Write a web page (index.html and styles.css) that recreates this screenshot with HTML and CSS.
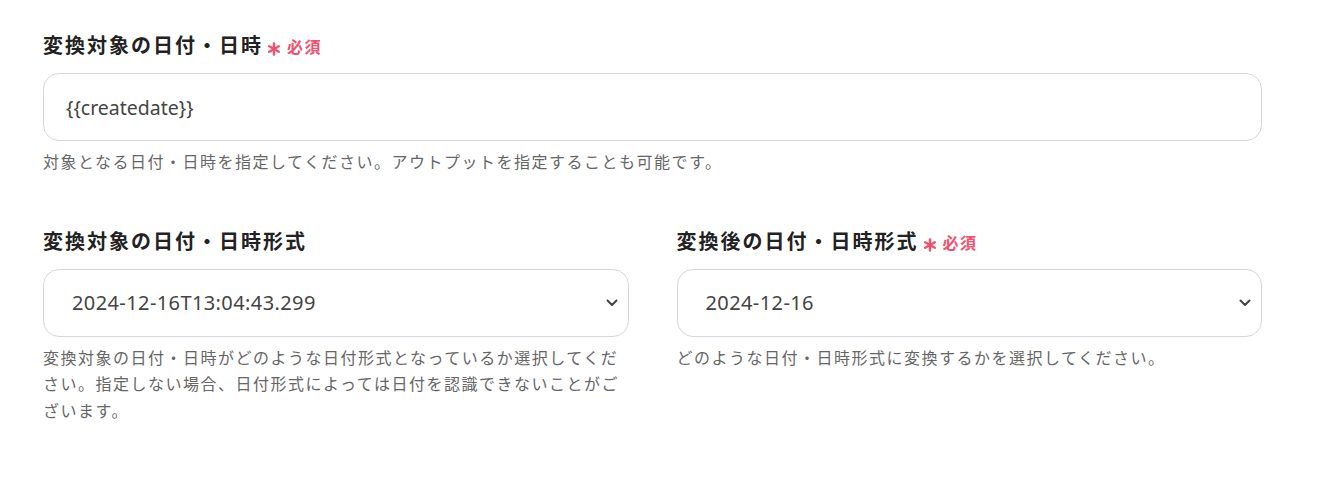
FILE: index.html
```html
<!DOCTYPE html>
<html lang="ja">
<head>
<meta charset="utf-8">
<link rel="stylesheet" href="styles.css">
</head>
<body>
<div class="form">
  <div class="field">
    <div class="label">変換対象の日付・日時<span class="req"><svg class="ast" width="14" height="14" viewBox="0 0 14 14"><g stroke="#f2506d" stroke-width="2.4" stroke-linecap="round"><line x1="7" y1="1.5" x2="7" y2="12.5"/><line x1="2.2" y1="4.2" x2="11.8" y2="9.8"/><line x1="2.2" y1="9.8" x2="11.8" y2="4.2"/></g></svg>必須</span></div>
    <div class="input">{{createdate}}</div>
    <p class="help">対象となる日付・日時を指定してください。アウトプットを指定することも可能です。</p>
  </div>
  <div class="row">
    <div class="field">
      <div class="label">変換対象の日付・日時形式</div>
      <div class="select">
        <span class="val">2024-12-16T13:04:43.299</span>
        <svg class="chev" width="12" height="8" viewBox="0 0 12 8"><polyline points="1.5,1.5 6,6 10.5,1.5" fill="none" stroke="#444" stroke-width="2" stroke-linecap="round" stroke-linejoin="round"/></svg>
      </div>
      <p class="help">変換対象の日付・日時がどのような日付形式となっているか選択してください。指定しない場合、日付形式によっては日付を認識できないことがございます。</p>
    </div>
    <div class="field">
      <div class="label">変換後の日付・日時形式<span class="req"><svg class="ast" width="14" height="14" viewBox="0 0 14 14"><g stroke="#f2506d" stroke-width="2.4" stroke-linecap="round"><line x1="7" y1="1.5" x2="7" y2="12.5"/><line x1="2.2" y1="4.2" x2="11.8" y2="9.8"/><line x1="2.2" y1="9.8" x2="11.8" y2="4.2"/></g></svg>必須</span></div>
      <div class="select">
        <span class="val">2024-12-16</span>
        <svg class="chev" width="12" height="8" viewBox="0 0 12 8"><polyline points="1.5,1.5 6,6 10.5,1.5" fill="none" stroke="#444" stroke-width="2" stroke-linecap="round" stroke-linejoin="round"/></svg>
      </div>
      <p class="help">どのような日付・日時形式に変換するかを選択してください。</p>
    </div>
  </div>
</div>
</body>
</html>
```
FILE: styles.css
```css
html, body {
  margin: 0;
  padding: 0;
  background: #fff;
}
body {
  font-family: "Noto Sans", "Noto Sans CJK JP", sans-serif;
  color: #222;
}
.form {
  width: 1219px;
  margin-left: 43px;
  padding-top: 31px;
}
.label {
  font-family: "Noto Sans CJK JP", sans-serif;
  font-weight: 700;
  font-size: 20px;
  line-height: 28px;
  height: 28px;
  letter-spacing: 2px;
  color: #222;
  margin-bottom: 14px;
  white-space: nowrap;
}
.req {
  color: #f2506d;
  font-size: 16px;
  letter-spacing: 1.5px;
  margin-left: 4px;
}
.ast {
  display: inline-block;
  margin-right: 6px;
  vertical-align: -3px;
}
.input, .select {
  box-sizing: border-box;
  height: 68px;
  border: 1px solid #d6d6dc;
  border-radius: 16px;
  display: flex;
  align-items: center;
  color: #444;
}
.input {
  padding-left: 22px;
  font-size: 19.5px;
}
.select {
  padding-left: 28px;
  padding-right: 10px;
  justify-content: space-between;
  font-size: 20px;
  letter-spacing: 0.4px;
}
.help {
  font-family: "Noto Sans CJK JP", sans-serif;
  margin: 7px 0 0;
  font-size: 16px;
  letter-spacing: 1.5px;
  line-height: 26.5px;
  color: #666;
}
.row {
  display: grid;
  grid-template-columns: 1fr 1fr;
  column-gap: 48px;
  margin-top: 52px;
}
```
